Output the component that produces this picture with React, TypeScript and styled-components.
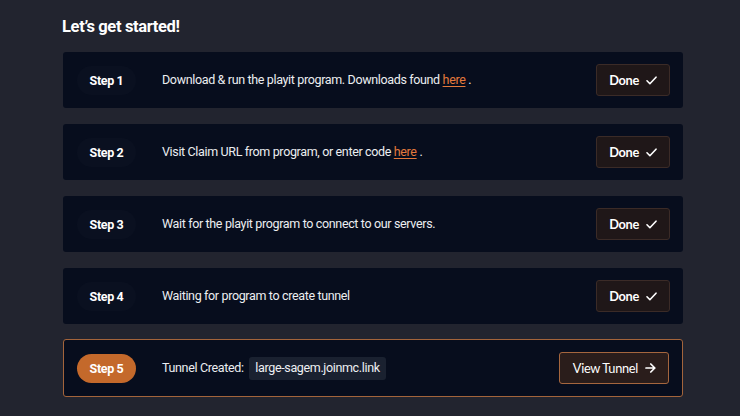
import styled, { createGlobalStyle } from "styled-components";

const GlobalStyle = createGlobalStyle`
  html, body {
    margin: 0;
    padding: 0;
    background: #22242f;
  }
  body {
    font-family: Roboto, "Liberation Sans", sans-serif;
    color: #ffffff;
  }
`;

const CheckIcon = () => (
  <svg width="11" height="9" viewBox="0 0 11 9" fill="none">
    <path
      d="M1 4.8 L3.9 7.7 L10 1.2"
      stroke="#ffffff"
      strokeWidth="1.6"
      strokeLinecap="round"
      strokeLinejoin="round"
    />
  </svg>
);

const ArrowIcon = () => (
  <svg width="11" height="10" viewBox="0 0 11 10" fill="none">
    <path
      d="M1 5 H9.8 M5.8 1 L9.8 5 L5.8 9"
      stroke="#ffffff"
      strokeWidth="1.7"
      strokeLinecap="round"
      strokeLinejoin="round"
    />
  </svg>
);

const App = () => {
  const steps = [
    {
      label: "Step 1",
      content: (
        <>
          Download &amp; run the playit program. Downloads found{" "}
          <Link href="#">here</Link> .
        </>
      ),
    },
    {
      label: "Step 2",
      content: (
        <>
          Visit Claim URL from program, or enter code{" "}
          <Link href="#">here</Link> .
        </>
      ),
    },
    {
      label: "Step 3",
      content: <>Wait for the playit program to connect to our servers.</>,
    },
    {
      label: "Step 4",
      content: <>Waiting for program to create tunnel</>,
    },
  ];

  return (
    <Page>
      <GlobalStyle />
      <Title>Let’s get started!</Title>
      <StepList>
        {steps.map((step) => (
          <StepCard key={step.label}>
            <StepBadge>{step.label}</StepBadge>
            <StepText>{step.content}</StepText>
            <ActionButton>
              Done <CheckIcon />
            </ActionButton>
          </StepCard>
        ))}
        <StepCard $active>
          <StepBadge $active>Step 5</StepBadge>
          <StepText>
            Tunnel Created: <Code>large-sagem.joinmc.link</Code>
          </StepText>
          <ActionButton $active>
            View Tunnel <ArrowIcon />
          </ActionButton>
        </StepCard>
      </StepList>
    </Page>
  );
};

const Page = styled.div`
  width: 740px;
  height: 416px;
  overflow: hidden;
  padding: 16px 0 0 63px;
  box-sizing: border-box;
`;

const Title = styled.h1`
  margin: 0 0 14px -1px;
  font-size: 16.5px;
  line-height: 22px;
  font-weight: 700;
  letter-spacing: -0.35px;
  color: #ffffff;
`;

const StepList = styled.div`
  display: flex;
  flex-direction: column;
  gap: 16px;
  width: 620px;
`;

const StepCard = styled.div<{ $active?: boolean }>`
  display: flex;
  align-items: center;
  box-sizing: border-box;
  padding: 0 13px 0 ${(p) => (p.$active ? "13px" : "14px")};
  margin-top: ${(p) => (p.$active ? "-1px" : "0")};
  background: #070d1d;
  border-radius: 3px;
  border: ${(p) => (p.$active ? "1px solid #a3643b" : "none")};
  height: ${(p) => (p.$active ? "58px" : "56px")};
`;

const StepBadge = styled.div<{ $active?: boolean }>`
  display: flex;
  align-items: center;
  justify-content: center;
  width: 59px;
  height: 29px;
  flex-shrink: 0;
  border-radius: 15px;
  background: ${(p) => (p.$active ? "#c4692b" : "#0a1020")};
  font-size: 12.5px;
  font-weight: 700;
  letter-spacing: -0.35px;
  color: #ffffff;
  margin-right: 26px;
`;

const StepText = styled.div`
  flex: 1;
  font-size: 12.5px;
  line-height: 16px;
  letter-spacing: -0.35px;
  color: #eceef1;
  white-space: nowrap;
`;

const Link = styled.a`
  color: #e4793c;
  text-decoration: underline;
  text-underline-offset: 2px;
`;

const Code = styled.span`
  display: inline-block;
  margin-left: 3px;
  padding: 3px 6px 4px;
  background: #1a2130;
  border-radius: 3px;
  color: #eef0f3;
`;

const ActionButton = styled.button<{ $active?: boolean }>`
  display: flex;
  align-items: center;
  gap: 7px;
  height: 32px;
  padding: 0 12px 0 ${(p) => (p.$active ? "13px" : "12px")};
  box-sizing: border-box;
  border-radius: 3px;
  border: 1px solid ${(p) => (p.$active ? "#a5663e" : "#3b2b27")};
  background: ${(p) => (p.$active ? "#2a1d1b" : "#1f1718")};
  font-family: Lato, "Liberation Sans", sans-serif;
  font-size: 12.8px;
  letter-spacing: -0.3px;
  font-weight: ${(p) => (p.$active ? 400 : 700)};
  color: #ffffff;
  cursor: pointer;
`;

export default App;
